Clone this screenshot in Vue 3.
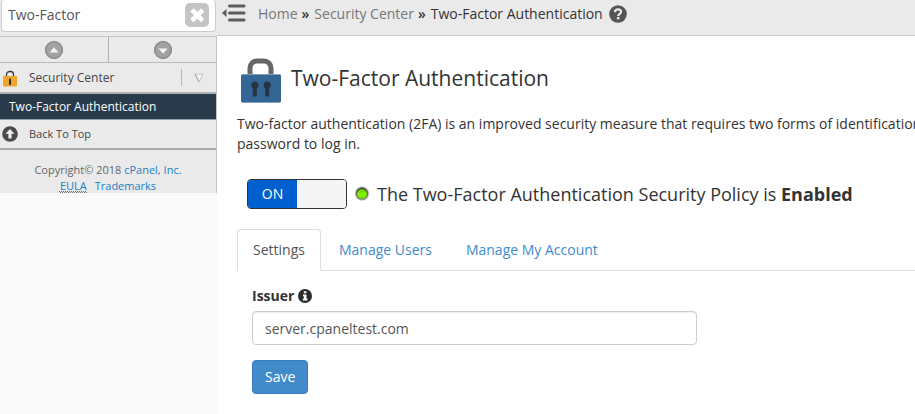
<script setup>
import { ref } from 'vue'

const query = ref('Two-Factor')
const issuer = ref('server.cpaneltest.com')
const enabled = ref(true)
const tab = ref('Settings')
const tabs = ['Settings', 'Manage Users', 'Manage My Account']
</script>

<template>
  <div class="app">
    <aside class="sidebar">
      <div class="search">
        <input v-model="query" type="text" aria-label="Search" />
        <button type="button" class="clear" aria-label="Clear search" @click="query = ''">
          <svg width="24" height="24" viewBox="0 0 24 24">
            <rect width="24" height="24" rx="5" fill="#c4c4c4" />
            <path d="M8.500 8.500l7.500 7.500M16 8.500L8.500 16" stroke="#fff" stroke-width="4.600" stroke-linecap="square" />
          </svg>
        </button>
      </div>

      <div class="steps">
        <button type="button" aria-label="Previous">
          <svg width="18" height="18" viewBox="0 0 18 18">
            <circle cx="9" cy="9" r="9" fill="#a2a2a2" />
            <circle cx="9" cy="9" r="8.300" fill="none" stroke="#878787" stroke-width="1.300" />
            <path d="M4.500 11.500h9L9 6.300z" fill="#f4f4f4" />
          </svg>
        </button>
        <button type="button" aria-label="Next">
          <svg width="18" height="18" viewBox="0 0 18 18">
            <circle cx="9" cy="9" r="9" fill="#a2a2a2" />
            <circle cx="9" cy="9" r="8.300" fill="none" stroke="#878787" stroke-width="1.300" />
            <path d="M4.500 7.500h9L9 12.700z" fill="#f4f4f4" />
          </svg>
        </button>
      </div>

      <nav>
        <div class="group">
          <a href="#" class="item">
            <svg width="20" height="20" viewBox="0 0 20 20">
              <path d="M6.500 9V6.500a3 3 0 0 1 3-3h1a3 3 0 0 1 3 3V9" fill="none" stroke="#2b3a47" stroke-width="1.300" />
              <rect x="3" y="8" width="14" height="10.500" rx="1" fill="#f0a62c" />
              <path d="M10 11.500v4.500" stroke="#2b2b2b" stroke-width="2" stroke-linecap="round" />
            </svg>
            <span>Security Center</span>
          </a>
          <button type="button" class="fold" aria-label="Collapse Security Center">
            <svg width="10" height="10" viewBox="0 0 10 10">
              <path d="M1 1h8L5 9z" fill="#f4f4f4" stroke="#c4c4c4" />
              <path d="M1 1l4 8" stroke="#a4a4a4" />
            </svg>
          </button>
        </div>
        <a href="#" class="current">Two-Factor Authentication</a>
        <a href="#" class="item top">
          <svg width="20" height="20" viewBox="0 0 20 20">
            <circle cx="10" cy="10" r="7.800" fill="#4a4a4a" />
            <path d="M10 5l4.500 4.800h-2.900V14.500H8.400V9.800H5.500z" fill="#eee" />
          </svg>
          <span>Back To Top</span>
        </a>
      </nav>

      <footer>
        <div>Copyright© 2018 <a href="#">cPanel, Inc.</a></div>
        <div class="legal">
          <a href="#"><abbr title="End User License Agreement">EULA</abbr></a>
          <a href="#">Trademarks</a>
        </div>
      </footer>
    </aside>

    <div class="main">
      <header>
        <button type="button" class="menu" aria-label="Collapse sidebar">
          <svg width="24" height="18" viewBox="0 0 24 18">
            <path d="M7.500 2h14.500M7.500 9h14.500M7.500 16h14.500" stroke="#5c5c5c" stroke-width="3" stroke-linecap="round" />
            <path d="M0 9l4.500-4v8z" fill="#5c5c5c" />
          </svg>
        </button>
        <div class="crumbs">
          <a href="#">Home</a><b>»</b><a href="#">Security Center</a><b>»</b><span>Two-Factor Authentication</span>
          <button type="button" aria-label="Help">
            <svg width="18" height="18" viewBox="0 0 18 18">
              <circle cx="9" cy="9" r="8.800" fill="#555" />
              <path d="M5.900 7.100C6 5 7.200 4.300 9 4.300c1.800 0 3.100 1 3.100 2.500 0 2.100-2.900 2.100-2.900 4.200" fill="none" stroke="#eaeaea" stroke-width="2.200" />
              <rect x="7.900" y="12" width="2.500" height="2.400" fill="#eaeaea" />
            </svg>
          </button>
        </div>
      </header>

      <main>
        <div class="title">
          <svg width="44" height="48" viewBox="0 0 44 48">
            <path d="M11 20V12a7 7 0 0 1 7-7h7a7 7 0 0 1 7 7V20" fill="none" stroke="#666" stroke-width="5" />
            <rect x="2" y="18.500" width="40" height="28" rx="1.500" fill="#336694" />
            <path d="M2.500 18.500h39M3 46.500h38" stroke="#7ea0be" />
            <g fill="#27333d">
              <circle cx="15.800" cy="29" r="3.600" />
              <rect x="13.800" y="30" width="4" height="10.500" />
              <circle cx="28.200" cy="29" r="3.600" />
              <rect x="26.200" y="30" width="4" height="10.500" />
            </g>
          </svg>
          <h1>Two-Factor Authentication</h1>
        </div>

        <p class="intro">
          Two-factor authentication (2FA) is an improved security measure that requires two forms of identification<br />
          password to log in.
        </p>

        <div class="policy">
          <button type="button" class="switch" role="switch" :aria-checked="enabled" aria-labelledby="policy" @click="enabled = !enabled">
            <span class="on">ON</span><span class="off"></span>
          </button>
          <svg width="16" height="16" viewBox="0 0 16 16">
            <defs>
              <radialGradient id="halo">
                <stop offset="0.650" stop-color="#333" />
                <stop offset="1" stop-color="#999" stop-opacity="0" />
              </radialGradient>
              <linearGradient id="lamp" x2="0" y2="1">
                <stop offset="0" stop-color="#62c400" />
                <stop offset="0.500" stop-color="#80f400" />
                <stop offset="1" stop-color="#72dc00" />
              </linearGradient>
            </defs>
            <circle cx="8" cy="7.500" r="7.800" fill="url(#halo)" />
            <circle cx="8" cy="8" r="5" fill="url(#lamp)" />
          </svg>
          <span id="policy">The Two-Factor Authentication Security Policy is <strong>Enabled</strong></span>
        </div>

        <div class="tabs" role="tablist">
          <button v-for="t in tabs" :key="t" type="button" role="tab" :aria-selected="t === tab" :class="{ active: t === tab }" @click="tab = t">{{ t }}</button>
        </div>

        <form @submit.prevent>
          <label for="issuer">
            Issuer
            <svg width="14" height="14" viewBox="0 0 14 14">
              <circle cx="7" cy="7" r="7" fill="#2b2b2b" />
              <path d="M5.800 2.300h2.600v2H5.800zM5 5.500h3.500v4.300h1v1.700H4.800V9.800h1V7.200H5z" fill="#fff" />
            </svg>
          </label>
          <input id="issuer" v-model="issuer" type="text" />
          <button type="submit">Save</button>
        </form>
      </main>
    </div>
  </div>
</template>

<style>
body {
  background: #fff;
}
</style>

<style scoped>
.app,
.app * {
  box-sizing: border-box;
}
.app {
  display: flex;
  min-height: 100vh;
  overflow: hidden;
  background: #fafafa;
  color: #333;
  font: 14px/20px "Open Sans", "Noto Sans", sans-serif;
}
button,
input {
  font: inherit;
  margin: 0;
}
button {
  border: 0;
  padding: 0;
  background: none;
  color: inherit;
  cursor: pointer;
}
svg {
  display: block;
  flex: none;
}
a {
  text-decoration: none;
}

.sidebar {
  flex: 0 0 217px;
  min-width: 0;
  align-self: flex-start;
  background: #eaeaea;
  font-size: 12px;
}
.steps,
nav,
footer {
  border-right: 1px solid #c4c4c4;
}
.search {
  display: flex;
  align-items: center;
  margin: 0 1px 4px;
  height: 32px;
  padding: 0 6px 2px 0;
  background: #fff;
  border: 1px solid #ccc;
  border-top: 0;
  border-radius: 4px;
}
.search input {
  flex: 1;
  min-width: 0;
  border: 0;
  outline: 0;
  padding: 0 6px;
  background: none;
  color: #555;
  font-size: 14px;
}
.steps {
  display: grid;
  grid-template-columns: 1fr 1fr;
  border-top: 1px solid #c4c4c4;
  border-bottom: 1px solid #bbb;
}
.steps button {
  display: flex;
  justify-content: center;
  align-items: center;
  height: 25px;
}
.steps button + button {
  border-left: 1px solid #b0b0b0;
}
.group {
  display: flex;
  align-items: center;
  height: 31px;
  border-bottom: 2px solid #b0b0b0;
}
.item {
  flex: 1;
  display: flex;
  align-items: center;
  gap: 9px;
  color: #444;
}
.fold {
  display: flex;
  align-items: center;
  height: 17px;
  padding: 0 12px;
  border-left: 1px solid #b8b8b8;
}
.current {
  display: block;
  padding: 3px 9px;
  line-height: 19px;
  background: #293a4a;
  color: #fff;
}
.top {
  height: 31px;
  border-top: 1px solid #8fa3ad;
  border-bottom: 2px solid #aaa;
  font-size: 11px;
}
footer {
  padding-top: 12px;
  text-align: center;
  font-size: 11px;
  line-height: 16px;
  color: #666;
}
footer a {
  color: #1a80c4;
}
.legal {
  display: flex;
  justify-content: center;
  gap: 8px;
  height: 15px;
}
abbr {
  display: block;
  height: 15px;
  text-decoration: underline dotted;
  border-bottom: 1px dotted #777;
}

.main {
  flex: 1;
  min-width: 0;
  background: #fff;
}
header {
  display: flex;
  align-items: flex-start;
  gap: 12px;
  height: 36px;
  padding: 4px 5px;
  background: #eaeaea;
  border-bottom: 1px solid #ccc;
}
.crumbs {
  display: flex;
  align-items: center;
  white-space: nowrap;
}
.crumbs a {
  color: #777;
}
.crumbs b {
  font-weight: 600;
  padding: 0 5px 0 4px;
}
.crumbs button {
  margin-left: 6px;
}
main {
  padding: 20px 0 20px 20px;
}
.title {
  display: flex;
  align-items: center;
  gap: 8px;
  padding-left: 2px;
}
h1 {
  margin: 0 0 4px;
  font-size: 21px;
  font-weight: 400;
  line-height: 28px;
}
.intro {
  margin: 10px 0 25px;
  white-space: nowrap;
}
.policy {
  display: flex;
  align-items: center;
  gap: 7px;
  padding-left: 10px;
  font-size: 18px;
  white-space: nowrap;
}
.switch {
  display: grid;
  grid-template-columns: 1fr 1fr;
  width: 100px;
  height: 30px;
  overflow: hidden;
  border: 1px solid #333;
  border-radius: 4px;
  font-size: 14px;
  line-height: 28px;
}
.on {
  background: #0060d0;
  color: #fff;
}
.off {
  background: #f5f5f5;
}
.tabs {
  display: flex;
  gap: 2px;
  margin-top: 20px;
  border-bottom: 1px solid #ddd;
}
.tabs button {
  margin-bottom: -1px;
  padding: 10px 15px;
  border: 1px solid transparent;
  border-radius: 4px 4px 0 0;
  color: #428bca;
}
.tabs .active {
  background: #fff;
  border-color: #ddd #ddd #fff;
  color: #555;
}
form {
  display: flex;
  flex-direction: column;
  align-items: flex-start;
  padding: 15px;
}
label {
  display: flex;
  align-items: center;
  gap: 4px;
  margin-bottom: 5px;
  font-weight: 700;
}
form input {
  width: 100%;
  max-width: 445px;
  height: 34px;
  padding: 6px 12px;
  border: 1px solid #ccc;
  border-radius: 4px;
  background: #fff;
  color: #555;
  box-shadow: inset 0 1px 1px rgba(0, 0, 0, 0.07);
}
form button {
  margin-top: 15px;
  padding: 6px 12px;
  border: 1px solid #357ebd;
  border-radius: 4px;
  background: #428bca;
  color: #fff;
}
</style>
